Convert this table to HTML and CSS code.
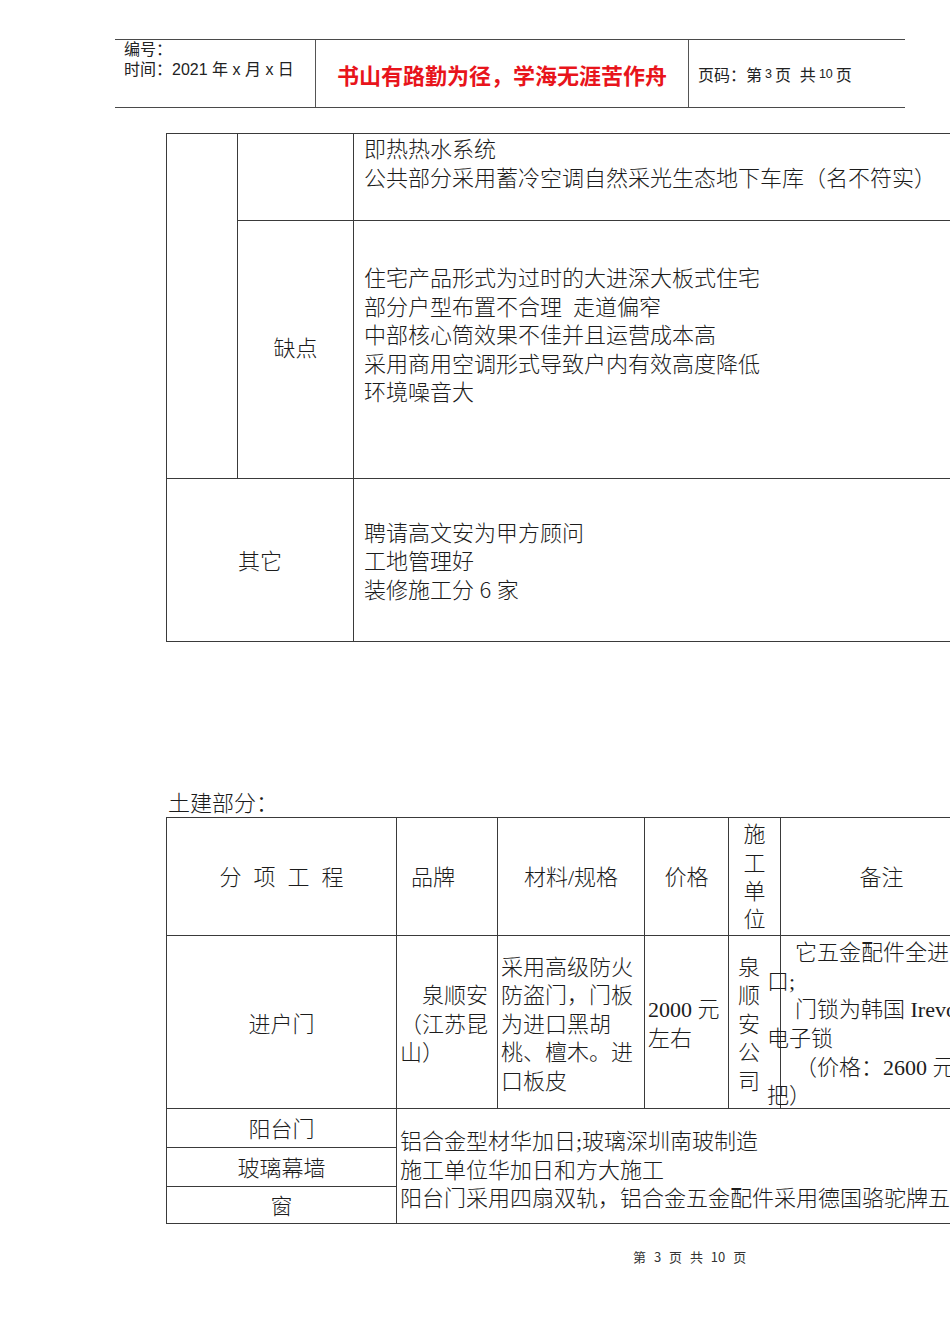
FILE: index.html
```html
<!DOCTYPE html>
<html lang="zh-CN">
<head>
<meta charset="utf-8">
<title>土建部分</title>
<link rel="stylesheet" href="styles.css">
</head>
<body>
<div class="page">
  <header class="doc-head">
    <div class="hc hc-left">
      <div>编号：</div>
      <div>时间：2021 年 x 月 x 日</div>
    </div>
    <div class="hc hc-mid">书山有路勤为径，学海无涯苦作舟</div>
    <div class="hc hc-right">页码：第<span class="hnum">3</span>页  共<span class="hnum">10</span>页</div>
  </header>

  <table class="t1">
    <colgroup><col class="t1c1"><col class="t1c2"><col class="t1c3"></colgroup>
    <tr class="t1r1">
      <td rowspan="2"></td>
      <td></td>
      <td class="txt top">即热热水系统<br>公共部分采用蓄冷空调自然采光生态地下车库（名不符实）</td>
    </tr>
    <tr class="t1r2">
      <td class="center">缺点</td>
      <td class="txt top2">住宅产品形式为过时的大进深大板式住宅<br>部分户型布置不合理&nbsp; 走道偏窄<br>中部核心筒效果不佳并且运营成本高<br>采用商用空调形式导致户内有效高度降低<br>环境噪音大</td>
    </tr>
    <tr class="t1r3">
      <td colspan="2" class="center">其它</td>
      <td class="txt">聘请高文安为甲方顾问<br>工地管理好<br>装修施工分 <span class="sans">6</span> 家</td>
    </tr>
  </table>

  <div class="sec-label">土建部分：</div>

  <table class="t2">
    <colgroup>
      <col class="k1"><col class="k2"><col class="k3"><col class="k4"><col class="k5"><col class="k6">
    </colgroup>
    <tr class="hrow">
      <td class="center spaced">分项工程</td>
      <td class="brand">品牌</td>
      <td class="center">材料/规格</td>
      <td class="center">价格</td>
      <td class="center unit">施<br>工<br>单<br>位</td>
      <td class="center">备注</td>
    </tr>
    <tr class="drow">
      <td class="center">进户门</td>
      <td class="cellp indent">泉顺安（江苏昆山）</td>
      <td class="cellp">采用高级防火防盗门，门板为进口黑胡桃、檀木。进口板皮</td>
      <td class="cellp">2000 元左右</td>
      <td class="vert">泉<br>顺<br>安<br>公<br>司</td>
      <td class="note-cell">
        <div class="note">
          <p>它五金配件全进口;</p>
          <p>门锁为韩国 Irevo 电子锁</p>
          <p>（价格：2600 元/把）</p>
        </div>
      </td>
    </tr>
    <tr class="srow1">
      <td class="center lbl">阳台门</td>
      <td colspan="5" rowspan="3" class="merged">铝合金型材华加日;玻璃深圳南玻制造<br>施工单位华加日和方大施工<br><span class="nowrap">阳台门采用四扇双轨，铝合金五金配件采用德国骆驼牌五</span></td>
    </tr>
    <tr class="srow2">
      <td class="center lbl">玻璃幕墙</td>
    </tr>
    <tr class="srow3">
      <td class="center lbl">窗</td>
    </tr>
  </table>

  <div class="foot">第 3 页 共 10 页</div>
</div>
</body>
</html>
```

FILE: styles.css
```css
html, body {
  margin: 0;
  padding: 0;
  background: #ffffff;
}
body {
  overflow-x: hidden;
  color: #1c1c1c;
  font-family: "Liberation Serif", "Noto Sans CJK SC", serif;
}
.page {
  width: 950px;
  overflow: hidden;
  padding-bottom: 60px;
}

/* header */
.doc-head {
  display: flex;
  box-sizing: border-box;
  margin: 39px 0 0 115px;
  width: 790px;
  height: 69px;
  border-top: 1.5px solid #4a4a4a;
  border-bottom: 1.5px solid #4a4a4a;
  font-family: "Liberation Sans", "Noto Sans CJK SC", sans-serif;
  color: #222;
}
.hc {
  box-sizing: border-box;
}
.hc-left {
  width: 201px;
  padding: 0 0 0 9px;
  font-size: 16px;
  line-height: 20px;
  border-right: 1px solid #555;
}
.hc-mid {
  width: 373px;
  display: flex;
  align-items: center;
  justify-content: center;
  font-family: "Noto Sans CJK SC", sans-serif;
  font-size: 22px;
  font-weight: bold;
  color: #e8141b;
  border-right: 1px solid #555;
}
.hc-right {
  flex: 1;
  display: flex;
  align-items: center;
  padding-left: 9px;
  font-size: 16px;
  white-space: pre;
}
.hnum {
  font-size: 12.5px;
  margin: 0 3px;
}

/* common table */
table {
  border-collapse: collapse;
  table-layout: fixed;
  font-size: 22px;
  line-height: 28.6px;
  font-weight: 300;
}
td {
  border: 1px solid #3a3a3a;
  padding: 0;
  vertical-align: middle;
}
.center {
  text-align: center;
}
.sans {
  font-family: "Noto Sans CJK SC", sans-serif;
  line-height: 0;
}

/* table 1 */
.t1 {
  margin: 25px 0 0 166px;
  width: 816px;
}
.t1c1 { width: 71px; }
.t1c2 { width: 116px; }
.t1c3 { width: 629px; }
.t1r1 { height: 87px; }
.t1r2 { height: 258px; }
.t1r3 { height: 163px; }
.t1r3 td { padding-top: 5px; }
.txt {
  padding-left: 10px;
  white-space: nowrap;
}
.top {
  vertical-align: top;
  padding-top: 2px;
}
.top2 {
  vertical-align: top;
  padding-top: 44px;
}

/* section label */
.sec-label {
  margin: 147px 0 0 168px;
  padding-top: 2px;
  font-size: 22px;
  line-height: 26px;
  font-weight: 300;
}

/* table 2 */
.t2 {
  margin-left: 166px;
  width: 816px;
}
.k1 { width: 230px; }
.k2 { width: 101px; }
.k3 { width: 147px; }
.k4 { width: 84px; }
.k5 { width: 52px; }
.k6 { width: 202px; }
.hrow { height: 118px; }
.hrow td { padding-top: 4px; }
.hrow td.unit { padding-top: 3px; }
.drow { height: 173px; }
.drow td { padding-top: 6px; }
.drow td.note-cell { padding-top: 0; }
.srow1 { height: 39px; }
.srow2 { height: 39px; }
.srow3 { height: 37px; }
.lbl { padding-top: 4px; }
.spaced {
  letter-spacing: 12px;
  text-indent: 12px;
}
.brand {
  padding-left: 14px;
}
.unit {
  line-height: 28.4px;
}
.cellp {
  padding-left: 3px;
  padding-right: 3px;
}
.indent {
  text-indent: 22px;
}
.vert {
  padding-left: 9px;
}
.note-cell {
  overflow: visible;
}
.note {
  margin-left: -14px;
  margin-bottom: -6px;
  width: 196px;
}
.note p {
  margin: 0;
  text-indent: 28px;
}
.merged {
  padding-left: 3px;
  padding-top: 10px;
  vertical-align: middle;
}
.nowrap {
  white-space: nowrap;
}

/* footer */
.foot {
  margin: 24px 0 0 633px;
  font-family: "Noto Sans CJK SC", sans-serif;
  font-size: 13px;
  line-height: 18px;
  word-spacing: 5px;
  color: #333;
}
```
